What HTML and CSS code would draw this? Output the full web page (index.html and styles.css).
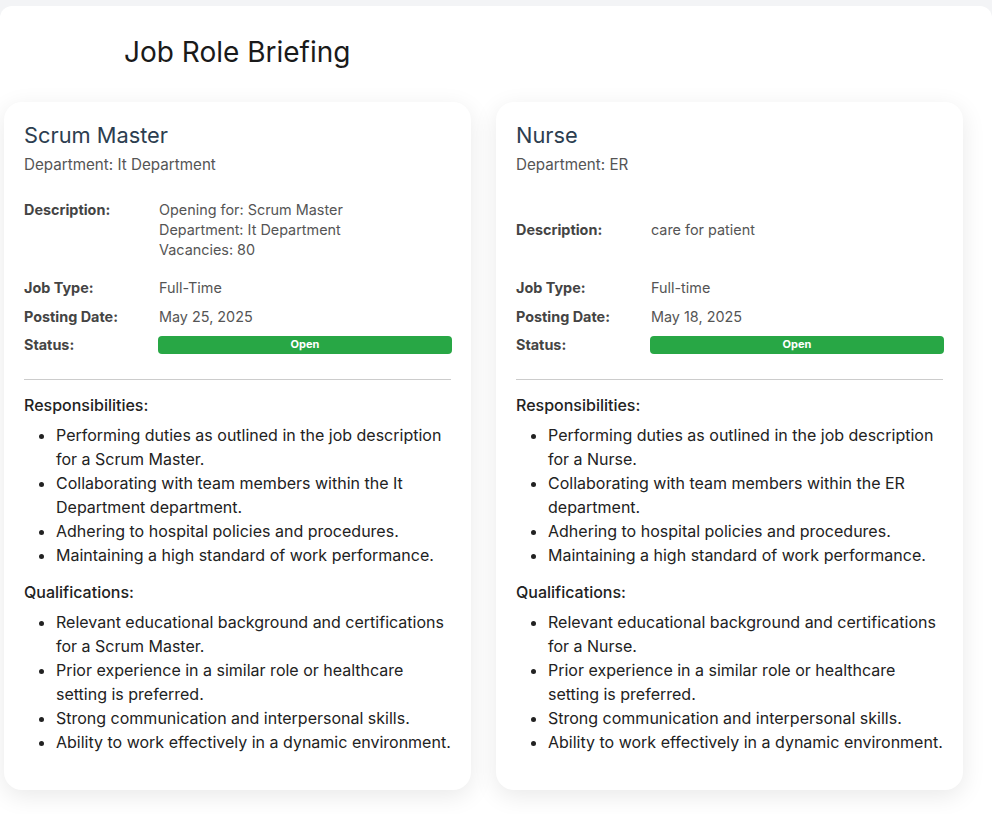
FILE: index.html
```html
<!DOCTYPE html>
<html lang="en">
<head>
<meta charset="utf-8">
<title>Job Role Briefing</title>
<link rel="stylesheet" href="styles.css">
</head>
<body>
<main class="page">
  <h1 class="page-title">Job Role Briefing</h1>
  <div class="cards">
    <article class="card">
      <h2 class="card-title">Scrum Master</h2>
      <p class="card-dept">Department: It Department</p>
      <div class="info">
        <div class="info-row info-row--desc">
          <span class="info-label">Description:</span>
          <span class="info-value">Opening for: Scrum Master<br>Department: It Department<br>Vacancies: 80</span>
        </div>
        <div class="info-row">
          <span class="info-label">Job Type:</span>
          <span class="info-value">Full-Time</span>
        </div>
        <div class="info-row">
          <span class="info-label">Posting Date:</span>
          <span class="info-value">May 25, 2025</span>
        </div>
        <div class="info-row info-row--status">
          <span class="info-label">Status:</span>
          <span class="status">Open</span>
        </div>
      </div>
      <hr class="divider">
      <h3 class="section-title">Responsibilities:</h3>
      <ul class="list">
        <li>Performing duties as outlined in the job description for a Scrum Master.</li>
        <li>Collaborating with team members within the It Department department.</li>
        <li>Adhering to hospital policies and procedures.</li>
        <li>Maintaining a high standard of work performance.</li>
      </ul>
      <h3 class="section-title">Qualifications:</h3>
      <ul class="list">
        <li>Relevant educational background and certifications for a Scrum Master.</li>
        <li>Prior experience in a similar role or healthcare setting is preferred.</li>
        <li>Strong communication and interpersonal skills.</li>
        <li>Ability to work effectively in a dynamic environment.</li>
      </ul>
    </article>
    <article class="card">
      <h2 class="card-title">Nurse</h2>
      <p class="card-dept">Department: ER</p>
      <div class="info">
        <div class="info-row info-row--desc info-row--center">
          <span class="info-label">Description:</span>
          <span class="info-value">care for patient</span>
        </div>
        <div class="info-row">
          <span class="info-label">Job Type:</span>
          <span class="info-value">Full-time</span>
        </div>
        <div class="info-row">
          <span class="info-label">Posting Date:</span>
          <span class="info-value">May 18, 2025</span>
        </div>
        <div class="info-row info-row--status">
          <span class="info-label">Status:</span>
          <span class="status">Open</span>
        </div>
      </div>
      <hr class="divider">
      <h3 class="section-title">Responsibilities:</h3>
      <ul class="list">
        <li>Performing duties as outlined in the job description for a Nurse.</li>
        <li>Collaborating with team members within the ER department.</li>
        <li>Adhering to hospital policies and procedures.</li>
        <li>Maintaining a high standard of work performance.</li>
      </ul>
      <h3 class="section-title">Qualifications:</h3>
      <ul class="list">
        <li>Relevant educational background and certifications for a Nurse.</li>
        <li>Prior experience in a similar role or healthcare setting is preferred.</li>
        <li>Strong communication and interpersonal skills.</li>
        <li>Ability to work effectively in a dynamic environment.</li>
      </ul>
    </article>
  </div>
</main>
</body>
</html>
```

FILE: styles.css
```css
* { box-sizing: border-box; }

html, body {
  margin: 0;
  padding: 0;
  background: #f3f4f6;
  font-family: Inter, "Noto Sans", sans-serif;
}

.page {
  margin-top: 6px;
  background: #ffffff;
  border-radius: 12px 12px 0 0;
  min-height: 808px;
  padding: 26px 0 24px 4px;
}

.page-title {
  margin: 0 0 30px 120px;
  font-size: 28px;
  line-height: 40px;
  font-weight: 400;
  color: #1a1a1a;
}

.cards {
  display: grid;
  grid-template-columns: 467px 467px;
  column-gap: 25px;
  align-items: start;
}

.card {
  background: #fff;
  border-radius: 18px;
  box-shadow: 0 6px 24px rgba(0, 0, 0, 0.09);
  padding: 20px 20px 18px 20px;
  height: 688px;
}

.card-title {
  margin: 0;
  font-size: 21.8px;
  line-height: 26px;
  font-weight: 400;
  color: #2c3e50;
}

.card-dept {
  margin: 7px 0 0;
  font-size: 15.2px;
  line-height: 20px;
  color: #555;
}

.info {
  margin-top: 25px;
  display: flex;
  flex-direction: column;
  gap: 9px;
}

.info-row {
  display: grid;
  grid-template-columns: 134px 1fr;
  align-items: center;
  font-size: 14.4px;
  line-height: 20px;
  min-height: 20px;
}

.info-row--desc {
  align-items: start;
  min-height: 60px;
  margin-bottom: 9px;
}

.info-row--center {
  align-items: center;
}

.info-row--status {
  margin-top: -1px;
}

.info-label {
  font-weight: 700;
  color: #444;
}

.info-value {
  color: #555;
  padding-left: 1px;
}

.status {
  display: block;
  height: 18px;
  margin-right: -1px;
  background: #28a745;
  color: #fff;
  border-radius: 4px;
  font-size: 11px;
  font-weight: 700;
  line-height: 16px;
  text-align: center;
}

.divider {
  margin: 24px 0 13px;
  border: 0;
  border-top: 1px solid #cccccc;
}

.section-title {
  margin: 0;
  font-size: 16px;
  line-height: 24px;
  font-weight: 500;
  color: #222;
}

.list {
  margin: 6px 0 13px;
  padding-left: 32px;
  font-size: 16px;
  line-height: 24px;
  color: #222;
}
```
